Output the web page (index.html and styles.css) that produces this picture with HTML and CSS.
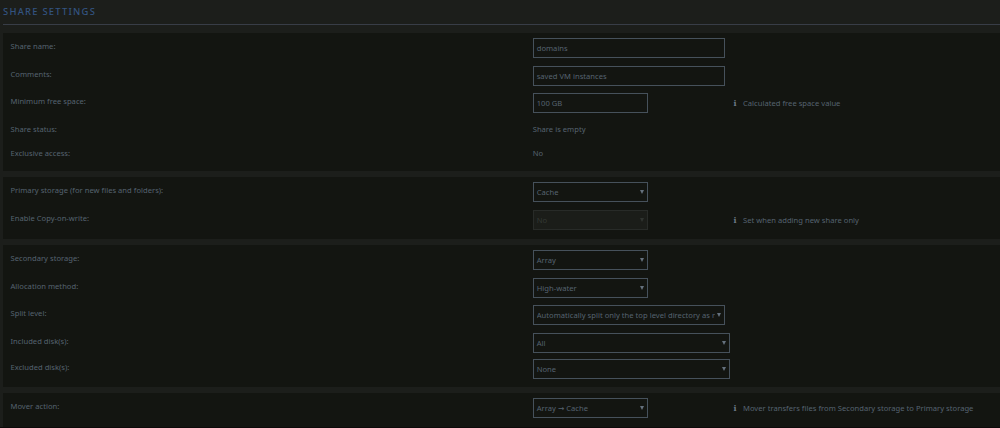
FILE: index.html
```
<!DOCTYPE html>
<html lang="en">
<head>
    <meta charset="UTF-8">
    <meta name="viewport" content="width=device-width, initial-scale=1.0">
    <title>Share Settings</title>
    <link rel="stylesheet" href="styles.css">
</head>
<body>
    <h1 class="title">Share Settings</h1>

    <form class="settings">
        <section class="panel panel-general">
            <div class="row">
                <label class="label">Share name:</label>
                <div class="field wide">domains</div>
            </div>
            <div class="row">
                <label class="label">Comments:</label>
                <div class="field wide">saved VM instances</div>
            </div>
            <div class="row">
                <label class="label">Minimum free space:</label>
                <div class="field">100 GB</div>
                <div class="hint"><b class="info">i</b><span>Calculated free space value</span></div>
            </div>
            <div class="row text-row">
                <label class="label">Share status:</label>
                <div class="value">Share is empty</div>
            </div>
            <div class="row text-row">
                <label class="label">Exclusive access:</label>
                <div class="value">No</div>
            </div>
        </section>

        <section class="panel panel-primary">
            <div class="row">
                <label class="label">Primary storage (for new files and folders):</label>
                <div class="field select">Cache</div>
            </div>
            <div class="row">
                <label class="label">Enable Copy-on-write:</label>
                <div class="field select disabled">No</div>
                <div class="hint"><b class="info">i</b><span>Set when adding new share only</span></div>
            </div>
        </section>

        <section class="panel panel-secondary">
            <div class="row">
                <label class="label">Secondary storage:</label>
                <div class="field select">Array</div>
            </div>
            <div class="row">
                <label class="label">Allocation method:</label>
                <div class="field select">High-water</div>
            </div>
            <div class="row">
                <label class="label">Split level:</label>
                <div class="field select wide"><span class="clip">Automatically split only the top level directory as r</span></div>
            </div>
            <div class="row disk-row">
                <label class="label">Included disk(s):</label>
                <div class="field select disks">All</div>
            </div>
            <div class="row disk-row">
                <label class="label">Excluded disk(s):</label>
                <div class="field select disks">None</div>
            </div>
        </section>

        <section class="panel panel-mover">
            <div class="row">
                <label class="label">Mover action:</label>
                <div class="field select">Array → Cache</div>
                <div class="hint"><b class="info">i</b><span>Mover transfers files from Secondary storage to Primary storage</span></div>
            </div>
        </section>
    </form>
</body>
</html>
```
FILE: styles.css
```
* {
    box-sizing: border-box;
}
body {
    margin: 0;
    height: 428px;
    overflow: hidden;
    background: #1c1e1b;
    border-bottom: 1px solid #0d0a0a;
    color: #566370;
    font-family: "Noto Sans", "DejaVu Sans", sans-serif;
    font-size: 7.6px;
    letter-spacing: 0.02px;
}
.title {
    margin: 0 0 8px 3px;
    height: 25px;
    border-bottom: 1px solid #383d47;
    color: #335380;
    font-size: 9.4px;
    font-weight: 500;
    line-height: 24px;
    letter-spacing: 1.25px;
    text-transform: uppercase;
}
.settings {
    display: flex;
    flex-direction: column;
    gap: 6px;
    padding-left: 3px;
}
.panel {
    background: #131511;
    padding: 5px 0 0 7.5px;
}
.panel-general { height: 138px; }
.panel-primary { height: 62px; }
.panel-secondary { height: 142px; }
.panel-mover { height: 34px; }

.row {
    display: grid;
    grid-template-columns: 522.2px 200.8px 1fr;
    align-items: start;
    height: 27.7px;
}
.text-row { height: 24px; }
.disk-row { height: 26.4px; }
.label, .value {
    line-height: 16px;
    white-space: nowrap;
}
.field {
    display: flex;
    align-items: center;
    justify-content: space-between;
    width: 115px;
    height: 20px;
    padding: 0 3px;
    border: 1px solid #46515b;
    white-space: nowrap;
}
.wide { width: 192px; }
.disks { width: 197px; }
.select::after {
    content: "";
    flex: none;
    border: 2px solid transparent;
    border-top: 4px solid #65717e;
    border-bottom: 0;
}
.clip { overflow: hidden; }
.disabled {
    background: #1b1d19;
    border-color: #282b28;
    color: #343934;
}
.disabled::after { border-top-color: #303430; }

.hint {
    display: flex;
    gap: 5.5px;
    line-height: 20px;
    white-space: nowrap;
}
.info {
    width: 4px;
    color: #6c7986;
    font-family: "DejaVu Serif", serif;
    font-size: 8px;
}
```
